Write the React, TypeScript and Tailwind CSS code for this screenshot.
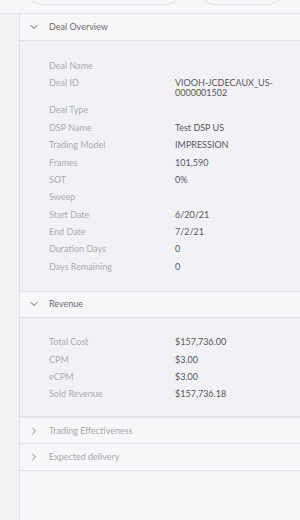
import { ChevronDown, ChevronRight } from "lucide-react";

const overview: [string, string][] = [
  ["Deal Name", ""],
  ["Deal ID", "VIOOH-JCDECAUX_US-0000001502"],
  ["Deal Type", ""],
  ["DSP Name", "Test DSP US"],
  ["Trading Model", "IMPRESSION"],
  ["Frames", "101,590"],
  ["SOT", "0%"],
  ["Sweep", ""],
  ["Start Date", "6/20/21"],
  ["End Date", "7/2/21"],
  ["Duration Days", "0"],
  ["Days Remaining", "0"],
];

const revenue: [string, string][] = [
  ["Total Cost", "$157,736.00"],
  ["CPM", "$3.00"],
  ["eCPM", "$3.00"],
  ["Sold Revenue", "$157,736.18"],
];

function Header({ title, open, tall = true }: { title: string; open?: boolean; tall?: boolean }) {
  return (
    <div
      className={
        (tall ? "h-[27px] " : "h-[26px] ") +
        "flex shrink-0 items-center border-b border-[#e2e2e6] bg-[#f7f7f9] pl-[8px]"
      }
    >
      {open ? (
        <ChevronDown size={12} strokeWidth={2} className="text-[#5e5e66]" />
      ) : (
        <ChevronRight size={12} strokeWidth={2} className="text-[#85858c]" />
      )}
      <span className={open ? "ml-[9px] text-[#6a6a72]" : "ml-[9px] text-[#a6a6ac]"}>{title}</span>
    </div>
  );
}

function Rows({ rows }: { rows: [string, string][] }) {
  return (
    <div className="flex flex-col">
      {rows.map(([k, v]) => (
        <div key={k} className="flex py-[3.7px] leading-[10px]">
          <span className="w-[126px] shrink-0 text-[#ababb1]">{k}</span>
          <span className="w-[100px] break-all text-[#57575e]">{v}</span>
        </div>
      ))}
    </div>
  );
}

export default function App() {
  return (
    <div
      className="flex h-[520px] w-[300px] flex-col overflow-hidden bg-[#f7f7f9] text-[9px]"
      style={{ fontFamily: "Lato, 'Open Sans', sans-serif" }}
    >
      <div className="flex h-[14px] shrink-0 items-end gap-[20px] overflow-hidden border-b border-[#e4e4e8] pb-[8px] pl-[27px]">
        <div className="h-[30px] w-[153px] shrink-0 rounded-[14px] border border-[#e0e0e4]" />
        <div className="h-[30px] w-[83px] shrink-0 rounded-[14px] border border-[#e0e0e4]" />
      </div>
      <div className="flex flex-1">
        <div className="w-[20px] shrink-0 border-r border-[#dedee2] bg-[#f2f2f5]" />
        <div className="flex flex-1 flex-col">
          <Header title="Deal Overview" open />
          <div className="border-b border-[#e2e2e6] bg-[#f2f2f6] pb-[15px] pl-[29px] pt-[16px]">
            <Rows rows={overview} />
          </div>
          <Header title="Revenue" open tall={false} />
          <div className="border-b-2 border-[#e4e4e8] bg-[#f2f2f6] pb-[13px] pl-[29px] pt-[16px]">
            <Rows rows={revenue} />
          </div>
          <Header title="Trading Effectiveness" tall={false} />
          <Header title="Expected delivery" />
        </div>
      </div>
    </div>
  );
}
